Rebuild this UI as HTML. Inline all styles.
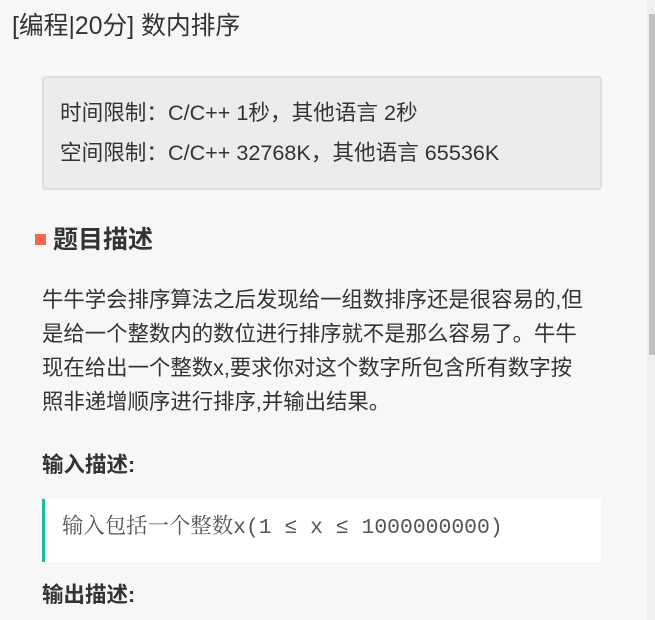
<!DOCTYPE html>
<html><head><meta charset="utf-8"><style>
body{margin:0;width:655px;height:620px;overflow:hidden;background:#f7f7f7;font-family:"Liberation Sans","Noto Sans CJK SC",sans-serif;color:#333;position:relative}
.t{position:absolute;left:12px;top:10px;font-size:24.8px;line-height:34px;color:#333;white-space:nowrap}
.box{position:absolute;left:42px;top:76px;width:556px;height:110px;background:#ececec;border:2px solid #dedede;border-radius:4px}
.box div{position:absolute;left:16px;font-size:21.6px;line-height:30px;white-space:nowrap;color:#333}
.h{position:absolute;left:53px;top:223px;font-size:25px;line-height:34px;font-weight:bold;white-space:nowrap}
.sq{position:absolute;left:35px;top:234px;width:11px;height:11px;background:#f26a4b}
.p{position:absolute;left:42px;top:283px;font-size:21.4px;line-height:34px;white-space:nowrap}
.h2{position:absolute;left:42px;font-size:21.5px;line-height:30px;font-weight:bold;white-space:nowrap}
.code{position:absolute;left:42px;top:499px;width:559px;height:63px;background:#fff;border-left:3px solid #1abc9c;box-sizing:border-box}
.code span{position:absolute;left:17px;top:14px;line-height:30px;font-family:"Liberation Mono","Noto Serif CJK SC",monospace;font-size:21.4px;color:#555;white-space:nowrap}
.sb{position:absolute;left:647px;top:0;width:8px;height:620px;background:#efefef}
.th{position:absolute;left:649px;top:14px;width:6px;height:341px;background:#c1c1c1}
</style></head><body>
<div class="t">[编程|20分] 数内排序</div>
<div class="box"><div style="top:20px">时间限制：C/C++ 1秒，其他语言 2秒</div><div style="top:60px">空间限制：C/C++ 32768K，其他语言 65536K</div></div>
<div class="sq"></div><div class="h">题目描述</div>
<div class="p">牛牛学会排序算法之后发现给一组数排序还是很容易的,但<br>是给一个整数内的数位进行排序就不是那么容易了。牛牛<br>现在给出一个整数x,要求你对这个数字所包含所有数字按<br>照非递增顺序进行排序,并输出结果。</div>
<div class="h2" style="top:450px">输入描述:</div>
<div class="code"><span>输入包括一个整数x(1 ≤ x ≤ 1000000000)</span></div>
<div class="h2" style="top:580px">输出描述:</div>
<div class="sb"></div><div class="th"></div>
</body></html>
